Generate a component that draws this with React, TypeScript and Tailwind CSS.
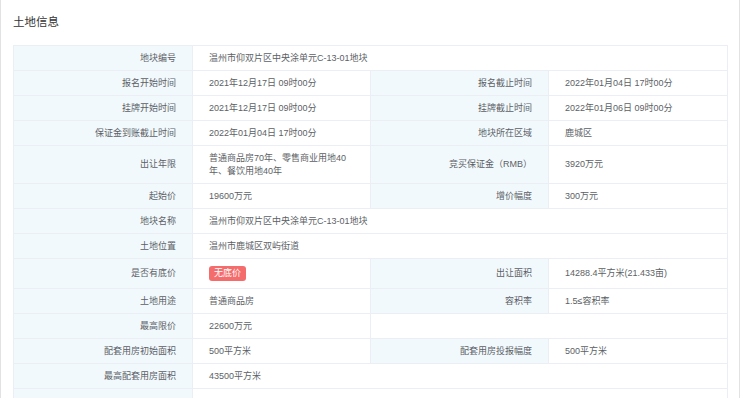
import { Fragment } from 'react';
import type { ReactNode } from 'react';

type Cell = { label: string; value?: ReactNode; span?: boolean };

const rows: Cell[][] = [
  [{ label: '地块编号', value: '温州市仰双片区中央涂单元C-13-01地块', span: true }],
  [
    { label: '报名开始时间', value: '2021年12月17日 09时00分' },
    { label: '报名截止时间', value: '2022年01月04日 17时00分' },
  ],
  [
    { label: '挂牌开始时间', value: '2021年12月17日 09时00分' },
    { label: '挂牌截止时间', value: '2022年01月06日 09时00分' },
  ],
  [
    { label: '保证金到账截止时间', value: '2022年01月04日 17时00分' },
    { label: '地块所在区域', value: '鹿城区' },
  ],
  [
    {
      label: '出让年限',
      value: (
        <>
          普通商品房70年、零售商业用地40
          <br />
          年、餐饮用地40年
        </>
      ),
    },
    { label: '竞买保证金（RMB）', value: '3920万元' },
  ],
  [
    { label: '起始价', value: '19600万元' },
    { label: '增价幅度', value: '300万元' },
  ],
  [{ label: '地块名称', value: '温州市仰双片区中央涂单元C-13-01地块', span: true }],
  [{ label: '土地位置', value: '温州市鹿城区双屿街道', span: true }],
  [
    {
      label: '是否有底价',
      value: (
        <span className="inline-block h-[15px] rounded-[3px] bg-[#f56c6c] px-[5px] align-top leading-[15px] text-white">
          无底价
        </span>
      ),
    },
    { label: '出让面积', value: '14288.4平方米(21.433亩)' },
  ],
  [
    { label: '土地用途', value: '普通商品房' },
    { label: '容积率', value: '1.5≤容积率' },
  ],
  [{ label: '最高限价', value: '22600万元' }],
  [
    { label: '配套用房初始面积', value: '500平方米' },
    { label: '配套用房投报幅度', value: '500平方米' },
  ],
  [{ label: '最高配套用房面积', value: '43500平方米', span: true }],
  [{ label: '', value: '', span: true }],
];

const td = 'border border-[#ebeef5] py-[5.5px] leading-[13px]';

function Row({ cells }: { cells: Cell[] }) {
  // the badge row is a little taller
  const pad = cells[0].label === '是否有底价' ? 'py-[7px]' : '';
  return (
    <tr>
      {cells.map((c, i) => (
        <Fragment key={i}>
          <td className={`${td} ${pad} bg-[#f2f9fd] pr-4 text-right`}>{c.label}</td>
          <td colSpan={c.span ? 3 : 1} className={`${td} ${pad} bg-white pl-4 pr-2`}>
            {c.value}
          </td>
        </Fragment>
      ))}
      {cells.length === 1 && !cells[0].span && <td colSpan={2} className={`${td} bg-white`} />}
    </tr>
  );
}

export default function App() {
  return (
    <div className="min-h-[398px] border-x border-[#e2e2e2] bg-white px-3 pt-[14px] font-['Liberation_Sans','Noto_Sans_CJK_SC',sans-serif]">
      <h2 className="mb-[15px] text-[11.5px] leading-[16px] font-normal text-[#333]">土地信息</h2>
      <table className="w-[714px] table-fixed border-collapse text-[9px] text-[#5c5f66]">
        <colgroup>
          <col className="w-[179px]" />
          <col className="w-[178px]" />
          <col className="w-[178px]" />
          <col className="w-[179px]" />
        </colgroup>
        <tbody>
          {rows.map((r, i) => (
            <Row key={i} cells={r} />
          ))}
        </tbody>
      </table>
    </div>
  );
}
